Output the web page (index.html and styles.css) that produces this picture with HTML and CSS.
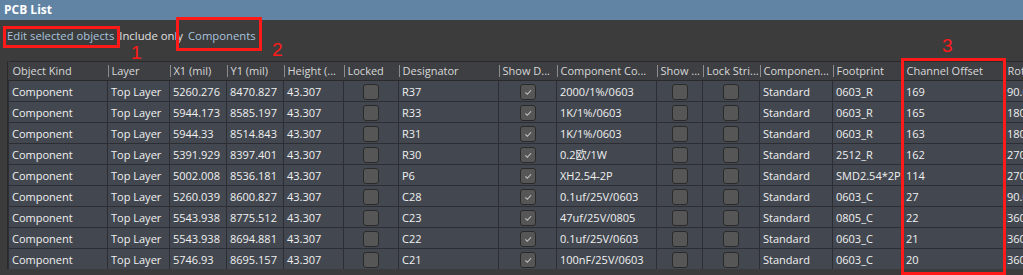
FILE: index.html
```html
<!DOCTYPE html>
<html lang="en">
<head>
    <meta charset="UTF-8">
    <title>PCB List</title>
    <link rel="stylesheet" href="styles.css">
</head>
<body>

<div class="panel">
    <div class="title-bar">PCB List</div>

    <div class="filter-bar">
        <span class="link">Edit selected objects</span>
        <span class="label">Include only</span>
        <span class="link">Components</span>
    </div>

    <div class="grid-wrap">
        <table class="grid">
            <colgroup>
                <col style="width:99px"><col style="width:62px"><col style="width:57px"><col style="width:57px">
                <col style="width:60px"><col style="width:55px"><col style="width:100px"><col style="width:58px">
                <col style="width:100px"><col style="width:46px"><col style="width:57px"><col style="width:73px">
                <col style="width:70px"><col style="width:101px"><col style="width:60px">
            </colgroup>
            <thead>
                <tr>
                    <th><span>Object Kind</span></th>
                    <th><span>Layer</span></th>
                    <th><span>X1 (mil)</span></th>
                    <th><span>Y1 (mil)</span></th>
                    <th><span>Height (...</span></th>
                    <th><span>Locked</span></th>
                    <th><span>Designator</span></th>
                    <th><span>Show D...</span></th>
                    <th><span>Component Co...</span></th>
                    <th><span>Show ...</span></th>
                    <th><span>Lock Stri...</span></th>
                    <th><span>Componen...</span></th>
                    <th><span>Footprint</span></th>
                    <th><span>Channel Offset</span></th>
                    <th><span>Rotation</span></th>
                </tr>
            </thead>
            <tbody id="rows"></tbody>
        </table>
    </div>

    <div class="mark box-1"></div>
    <div class="mark box-2"></div>
    <div class="mark box-3"></div>
    <div class="num num-1">1</div>
    <div class="num num-2">2</div>
    <div class="num num-3">3</div>
</div>

<script>
    var data = [
        ['5260.276', '8470.827', 'R37', '2000/1%/0603', '0603_R', '169', '90.000'],
        ['5944.173', '8585.197', 'R33', '1K/1%/0603', '0603_R', '165', '180.000'],
        ['5944.33', '8514.843', 'R31', '1K/1%/0603', '0603_R', '163', '180.000'],
        ['5391.929', '8397.401', 'R30', '0.2欧/1W', '2512_R', '162', '270.000'],
        ['5002.008', '8536.181', 'P6', 'XH2.54-2P', 'SMD2.54*2P', '114', '270.000'],
        ['5260.039', '8600.827', 'C28', '0.1uf/25V/0603', '0603_C', '27', '90.000'],
        ['5543.938', '8775.512', 'C23', '47uf/25V/0805', '0805_C', '22', '360.000'],
        ['5543.938', '8694.881', 'C22', '0.1uf/25V/0603', '0603_C', '21', '360.000'],
        ['5746.93', '8695.157', 'C21', '100nF/25V/0603', '0603_C', '20', '360.000']
    ];

    var check = '<span class="box checked"><svg viewBox="0 0 16 16"><path d="M5 8.5l2.2 2.2L11.5 6" fill="none" stroke="#c8c8c8" stroke-width="1.2"/></svg></span>';
    var empty = '<span class="box"></span>';

    var html = '';
    data.forEach(function(r) {
        html += '<tr>' +
            '<td>Component</td>' +
            '<td>Top Layer</td>' +
            '<td>' + r[0] + '</td>' +
            '<td>' + r[1] + '</td>' +
            '<td>43.307</td>' +
            '<td class="cb">' + empty + '</td>' +
            '<td>' + r[2] + '</td>' +
            '<td class="cb">' + check + '</td>' +
            '<td>' + r[3] + '</td>' +
            '<td class="cb">' + empty + '</td>' +
            '<td class="cb">' + empty + '</td>' +
            '<td>Standard</td>' +
            '<td>' + r[4] + '</td>' +
            '<td>' + r[5] + '</td>' +
            '<td>' + r[6] + '</td>' +
            '</tr>';
    });
    document.getElementById('rows').innerHTML = html;
</script>

</body>
</html>
```

FILE: styles.css
```css
body {
    margin: 0;
    background-color: #3c3c3c;
    font-family: "Open Sans", "Noto Sans CJK SC", sans-serif;
    font-size: 11px;
    color: #e6e6e6;
    overflow: hidden;
}

.panel {
    position: relative;
    height: 275px;
    background-color: #3c3c3c;
}

.title-bar {
    height: 20px;
    line-height: 19px;
    padding-left: 4px;
    background-color: #6183a4;
    color: #ffffff;
    font-weight: bold;
    font-size: 12px;
}

.filter-bar {
    display: flex;
    gap: 5px;
    height: 41px;
    padding: 7px 0 0 7px;
    box-sizing: border-box;
    line-height: 18px;
    font-size: 11.3px;
}

.filter-bar .link {
    color: #a8c2dc;
}

.filter-bar .label {
    color: #e0e0e0;
}

.grid-wrap {
    margin-left: 7px;
    border-left: 1px solid #2a2a2a;
    overflow: hidden;
    height: 208px;
    background-color: #3c3c3c;
}

.grid {
    table-layout: fixed;
    border-collapse: collapse;
    width: 1055px;
}

.grid th {
    height: 18px;
    padding: 0;
    background-color: #3d3f43;
    border-top: 1px solid #2a2a2a;
    border-bottom: 1px solid #2a2a2a;
    font-weight: normal;
    text-align: left;
    color: #d8d8d8;
    white-space: nowrap;
    overflow: hidden;
}

.grid th span {
    display: block;
    padding-left: 3px;
    line-height: 12px;
    border-left: 1px solid #8c8c8c;
}

.grid th:first-child span {
    border-left-color: transparent;
}

.grid td {
    height: 20px;
    padding: 0 0 0 3px;
    background-color: #434850;
    border: 1px solid #2c2e33;
    white-space: nowrap;
    overflow: hidden;
    color: #f0f0f0;
}

.grid td.cb {
    padding: 0;
    text-align: center;
}

.box {
    display: inline-block;
    width: 14px;
    height: 14px;
    border: 1px solid #2a2a2a;
    border-radius: 3px;
    background-color: #565656;
    vertical-align: middle;
}

.box svg {
    display: block;
    width: 14px;
    height: 14px;
}

.mark {
    position: absolute;
    border: 3px solid #ff1a1a;
    box-sizing: border-box;
}

.box-1 {
    left: 3px;
    top: 26px;
    width: 117px;
    height: 22px;
}

.box-2 {
    left: 176px;
    top: 17px;
    width: 86px;
    height: 34px;
}

.box-3 {
    left: 901px;
    top: 58px;
    width: 105px;
    height: 217px;
}

.num {
    position: absolute;
    color: #ff1a1a;
    font-family: "Liberation Sans", sans-serif;
    font-size: 19px;
    line-height: 19px;
}

.num-1 { left: 131px; top: 43px; }
.num-2 { left: 272px; top: 40px; }
.num-3 { left: 942px; top: 36px; }
```
